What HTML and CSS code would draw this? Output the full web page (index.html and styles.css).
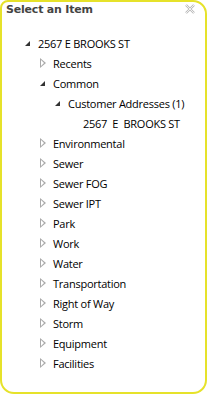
FILE: index.html
```html
<!DOCTYPE html>
<html>
<head>
<meta charset="utf-8">
<link rel="stylesheet" href="styles.css">
</head>
<body>
<div class="panel">
  <div class="header">
    <span class="title">Select an Item</span>
    <svg class="close" width="10" height="10" viewBox="0 0 10 10"><path d="M1 1 L9 9 M9 1 L1 9" stroke="#bbb" stroke-width="2.4"/><path d="M1 1 L9 9 M9 1 L1 9" stroke="#fff" stroke-width="0.8"/></svg>
  </div>
  <ul class="tree">
    <li class="node">
      <div class="row"><span class="exp open"></span><span class="label">2567 E BROOKS ST</span></div>
      <ul class="tree sub">
        <li class="node"><div class="row"><span class="exp closed"></span><span class="label">Recents</span></div></li>
        <li class="node">
          <div class="row"><span class="exp open"></span><span class="label">Common</span></div>
          <ul class="tree sub">
            <li class="node">
              <div class="row"><span class="exp open"></span><span class="label">Customer Addresses (1)</span></div>
              <ul class="tree sub">
                <li class="node"><div class="row"><span class="exp none"></span><span class="label">2567&nbsp; E&nbsp; BROOKS ST</span></div></li>
              </ul>
            </li>
          </ul>
        </li>
        <li class="node"><div class="row"><span class="exp closed"></span><span class="label">Environmental</span></div></li>
        <li class="node"><div class="row"><span class="exp closed"></span><span class="label">Sewer</span></div></li>
        <li class="node"><div class="row"><span class="exp closed"></span><span class="label">Sewer FOG</span></div></li>
        <li class="node"><div class="row"><span class="exp closed"></span><span class="label">Sewer IPT</span></div></li>
        <li class="node"><div class="row"><span class="exp closed"></span><span class="label">Park</span></div></li>
        <li class="node"><div class="row"><span class="exp closed"></span><span class="label">Work</span></div></li>
        <li class="node"><div class="row"><span class="exp closed"></span><span class="label">Water</span></div></li>
        <li class="node"><div class="row"><span class="exp closed"></span><span class="label">Transportation</span></div></li>
        <li class="node"><div class="row"><span class="exp closed"></span><span class="label">Right of Way</span></div></li>
        <li class="node"><div class="row"><span class="exp closed"></span><span class="label">Storm</span></div></li>
        <li class="node"><div class="row"><span class="exp closed"></span><span class="label">Equipment</span></div></li>
        <li class="node"><div class="row"><span class="exp closed"></span><span class="label">Facilities</span></div></li>
      </ul>
    </li>
  </ul>
</div>
</body>
</html>
```
FILE: styles.css
```css
html, body { margin: 0; padding: 0; background: #fff; }
body { font-family: "DejaVu Sans", sans-serif; }
.panel {
  box-sizing: border-box;
  width: 207px;
  height: 394px;
  border: 2px solid #e6e22a;
  border-radius: 8px 14px 14px 14px;
  background: #fff;
}
.header {
  display: flex;
  justify-content: space-between;
  align-items: center;
  height: 14px;
  padding: 0 10px 0 4px;
}
.title { font-size: 11px; font-weight: bold; color: #444; letter-spacing: -0.2px; }
.close { display: block; }
.tree { list-style: none; margin: 0; padding: 0; }
.panel > .tree { padding: 17px 0 0 23px; }
.sub { padding-left: 15px; }
.row { display: flex; align-items: center; height: 20px; }
.exp { width: 13px; height: 20px; position: relative; flex: none; }
.exp.open::before {
  content: ""; position: absolute; left: 0; top: 8px;
  border-style: solid; border-width: 0 0 5px 5px;
  border-color: transparent transparent #333 transparent;
}
.exp.closed::before {
  content: ""; position: absolute; left: 0; top: 5px;
  width: 0; height: 0;
  border-style: solid; border-width: 5px 0 5px 6px;
  border-color: transparent transparent transparent #aaa;
}
.exp.closed::after {
  content: ""; position: absolute; left: 1px; top: 7px;
  width: 0; height: 0;
  border-style: solid; border-width: 3px 0 3px 3.5px;
  border-color: transparent transparent transparent #fff;
}
.label { font-family: "Open Sans", sans-serif; font-size: 11px; color: #000; white-space: pre; letter-spacing: -0.25px; }
```
